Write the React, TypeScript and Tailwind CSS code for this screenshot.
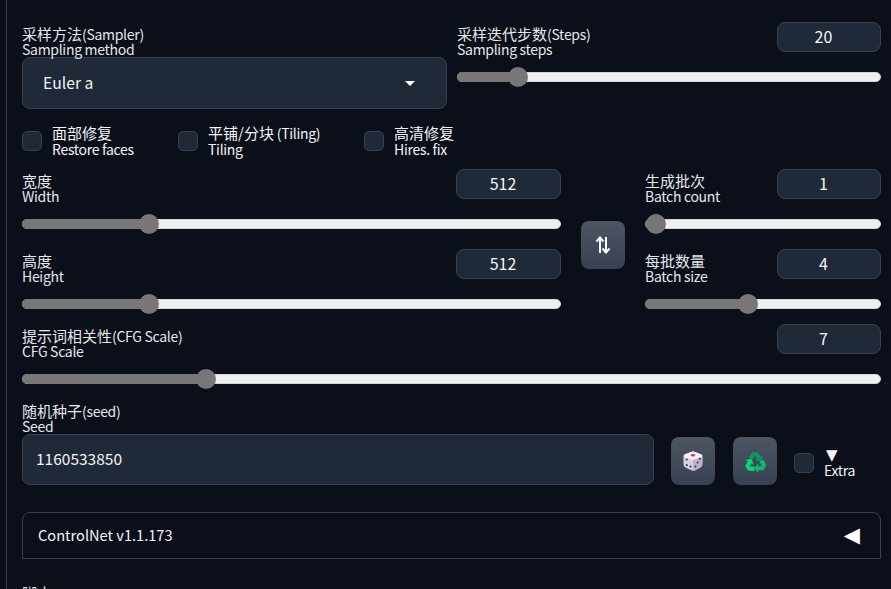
import React from 'react';

const font = { fontFamily: '"Noto Sans CJK SC", "Noto Sans", sans-serif' };

// Chinese runs are a size up from the latin around them
function Zh({ children }: { children: React.ReactNode }) {
  return <span className="text-[15px] tracking-normal">{children}</span>;
}

function Label({ zh, latin, en, className = '' }: { zh: string; latin?: string; en: string; className?: string }) {
  return (
    <div className={`text-[14px] leading-[15px] tracking-[-0.3px] text-gray-200 ${className}`}>
      <div className="h-[16px] whitespace-nowrap"><Zh>{zh}</Zh>{latin}</div>
      <div className="h-[15px] whitespace-nowrap">{en}</div>
    </div>
  );
}

function NumberBox({ value, className = '' }: { value: string; className?: string }) {
  return (
    <div className={`flex h-[30px] shrink-0 items-center justify-center rounded-lg border border-[#374151] bg-[#1f2937] pb-[2px] pr-[11px] text-[16px] text-gray-100 ${className}`}>
      {value}
    </div>
  );
}

function Slider({ percent }: { percent: number }) {
  return (
    <div className="relative mt-[20px] h-[10px] rounded-full border border-[#d1d5db] bg-[#efefef]">
      <div className="-m-px h-[10px] rounded-full bg-[#777777]" style={{ width: `${percent}%` }} />
      <div className="absolute top-1/2 h-[20px] w-[20px] -translate-x-1/2 -translate-y-1/2 rounded-full bg-[#777777]" style={{ left: `${percent}%` }} />
    </div>
  );
}

function SliderBlock({ zh, latin, en, value, percent, boxWidth = 'w-[105px]' }: { zh: string; latin?: string; en: string; value: string; percent: number; boxWidth?: string }) {
  return (
    <div>
      <div className="flex h-[30px] justify-between">
        <Label zh={zh} latin={latin} en={en} className="pt-[4px]" />
        <NumberBox value={value} className={boxWidth} />
      </div>
      <Slider percent={percent} />
    </div>
  );
}

function Check({ zh, latin, en, className = '' }: { zh: string; latin?: string; en: string; className?: string }) {
  return (
    <div className={`flex items-center gap-[10px] ${className}`}>
      <div className="h-[20px] w-[20px] rounded-[5px] border border-[#374151] bg-[#1f2937]" />
      <div className="pb-px text-[14px] leading-[16px] tracking-[-0.3px] text-gray-100">
        <div className="h-[16px] whitespace-nowrap"><Zh>{zh}</Zh>{latin}</div>
        <div className="h-[16px] whitespace-nowrap">{en}</div>
      </div>
    </div>
  );
}

function IconButton({ children, className = '' }: { children: React.ReactNode; className?: string }) {
  return (
    <div className={`flex h-[48px] w-[44px] shrink-0 items-center justify-center rounded-lg bg-gradient-to-b from-[#4b5563] to-[#374151] ${className}`}>
      {children}
    </div>
  );
}

function SwapIcon() {
  return (
    <svg width="16" height="18" viewBox="0 0 16 18" fill="none" stroke="#ffffff" strokeWidth="2">
      <path d="M5 17V2M1.5 5.5 L5 1.5 L8.5 5.5" />
      <path d="M11 1V16M7.5 12.5 L11 16.5 L14.5 12.5" />
    </svg>
  );
}

function DiceIcon() {
  return (
    <svg width="20" height="20" viewBox="0 0 20 20">
      <path d="M10 .5 C11 .5 18 3 19 4 C19.6 4.6 19.6 13 19 15 C18.6 16 11.5 19.8 10.5 19.8 C9 19.8 2 16.6 1.2 15.6 C.4 14.6 .2 5 1 4 C2 3 9 .5 10 .5 Z" fill="#d9d0de" />
      <path d="M10 .5 C11 .5 18 3 19 4 C19.3 4.3 19.4 5 19.4 6 L10 9 L.7 6 C.7 5 .7 4.3 1 4 C2 3 9 .5 10 .5 Z" fill="#f3eff5" />
      <path d="M19.4 6 C19.6 8 19.4 13.6 19 15 C18.6 16 11.5 19.8 10.5 19.8 L10 9 Z" fill="#bdb2c6" />
      <ellipse cx="10" cy="4.2" rx="2.2" ry="1.2" fill="#e8323c" />
      <circle cx="3.8" cy="8.6" r="1.1" fill="#4b3f72" />
      <circle cx="7.6" cy="15.6" r="1.1" fill="#4b3f72" />
      <circle cx="3.8" cy="14.2" r="1.1" fill="#4b3f72" />
      <circle cx="16.8" cy="7.8" r="1.1" fill="#4b3f72" />
      <circle cx="14.6" cy="11.6" r="1.1" fill="#4b3f72" />
      <circle cx="12.4" cy="15.6" r="1.1" fill="#4b3f72" />
    </svg>
  );
}

function RecycleIcon() {
  const arm = 'M36 6 H62 L74 27 L85 21 L76 50 L47 43 L58 37 L49 21 L37 42 L18 31 Z';
  return (
    <svg width="21" height="21" viewBox="0 0 100 100">
      <path d={arm} fill="#0a9a60" />
      <path d={arm} fill="#05d974" transform="rotate(240 50 56)" />
      <path d={arm} fill="#08bd6a" transform="rotate(120 50 56)" />
    </svg>
  );
}

export default function App() {
  return (
    <div className="h-[589px] w-[891px] overflow-hidden bg-[#0b0f19]" style={font}>
      <div className="ml-[6px] h-full border-l border-[#374151] pl-[15px] pr-[10px] pt-[22px]">
        <div className="grid grid-cols-[425px_1fr] gap-[10px]">
          <div>
            <Label zh="采样方法" latin="(Sampler)" en="Sampling method" className="pt-[4px]" />
            <div className="flex h-[52px] items-center justify-between rounded-lg border border-[#374151] bg-[#1f2937] pl-[20px] pr-[31px] text-[15.7px] text-gray-100">
              <span>Euler a</span>
              <span className="h-0 w-0 border-x-[5px] border-t-[5px] border-x-transparent border-t-white" />
            </div>
          </div>
          <SliderBlock zh="采样迭代步数" latin="(Steps)" en="Sampling steps" value="20" percent={14.2} boxWidth="w-[104px]" />
        </div>

        <div className="mt-[16px] flex h-[32px]">
          <Check zh="面部修复" en="Restore faces" className="w-[156px]" />
          <Check zh="平铺/分块" latin=" (Tiling)" en="Tiling" className="w-[186px]" />
          <Check zh="高清修复" en="Hires. fix" />
        </div>

        <div className="mt-[12px] grid grid-cols-[539px_44px_1fr] gap-x-[20px]">
          <div className="flex flex-col gap-[20px]">
            <SliderBlock zh="宽度" en="Width" value="512" percent={23.5} />
            <SliderBlock zh="高度" en="Height" value="512" percent={23.5} />
          </div>
          <div className="flex items-center pt-[12px]">
            <IconButton>
              <SwapIcon />
            </IconButton>
          </div>
          <div className="flex flex-col gap-[20px]">
            <SliderBlock zh="生成批次" en="Batch count" value="1" percent={4.2} boxWidth="w-[104px]" />
            <SliderBlock zh="每批数量" en="Batch size" value="4" percent={43.6} boxWidth="w-[104px]" />
          </div>
        </div>

        <div className="mt-[15px]">
          <SliderBlock zh="提示词相关性" latin="(CFG Scale)" en="CFG Scale" value="7" percent={21.4} boxWidth="w-[104px]" />
        </div>

        <div className="mt-[19px] flex items-end">
          <div className="w-[632px] shrink-0">
            <Label zh="随机种子" latin="(seed)" en="Seed" />
            <div className="flex h-[51px] items-center rounded-lg border border-[#374151] bg-[#1f2937] pb-[2px] pl-[13px] text-[15.5px] text-gray-100">
              1160533850
            </div>
          </div>
          <IconButton className="ml-[17px]"><DiceIcon /></IconButton>
          <IconButton className="ml-[18px]"><RecycleIcon /></IconButton>
          <div className="mb-[7px] ml-[17px] flex items-center gap-[10px]">
            <div className="h-[20px] w-[20px] rounded-[5px] border border-[#374151] bg-[#1f2937]" />
            <div className="text-[14px] leading-[15px] tracking-[-0.3px] text-gray-100">
              <div className="pl-[2px] text-[15px] leading-[15px]" style={{ fontFamily: '"DejaVu Sans", sans-serif' }}>▼</div>
              <div>Extra</div>
            </div>
          </div>
        </div>

        <div className="mt-[27px] flex h-[47px] items-center justify-between rounded-t-lg border border-[#374151] pl-[15px] pr-[20px] text-[14.6px] text-gray-100">
          <span className="pb-[2px]">ControlNet v1.1.173</span>
          <span className="text-[21px] leading-none text-white" style={{ fontFamily: '"DejaVu Sans", sans-serif' }}>◀</span>
        </div>

        <div className="mt-[26px] text-[15px] leading-[15px] text-gray-200">脚本</div>
      </div>
    </div>
  );
}
